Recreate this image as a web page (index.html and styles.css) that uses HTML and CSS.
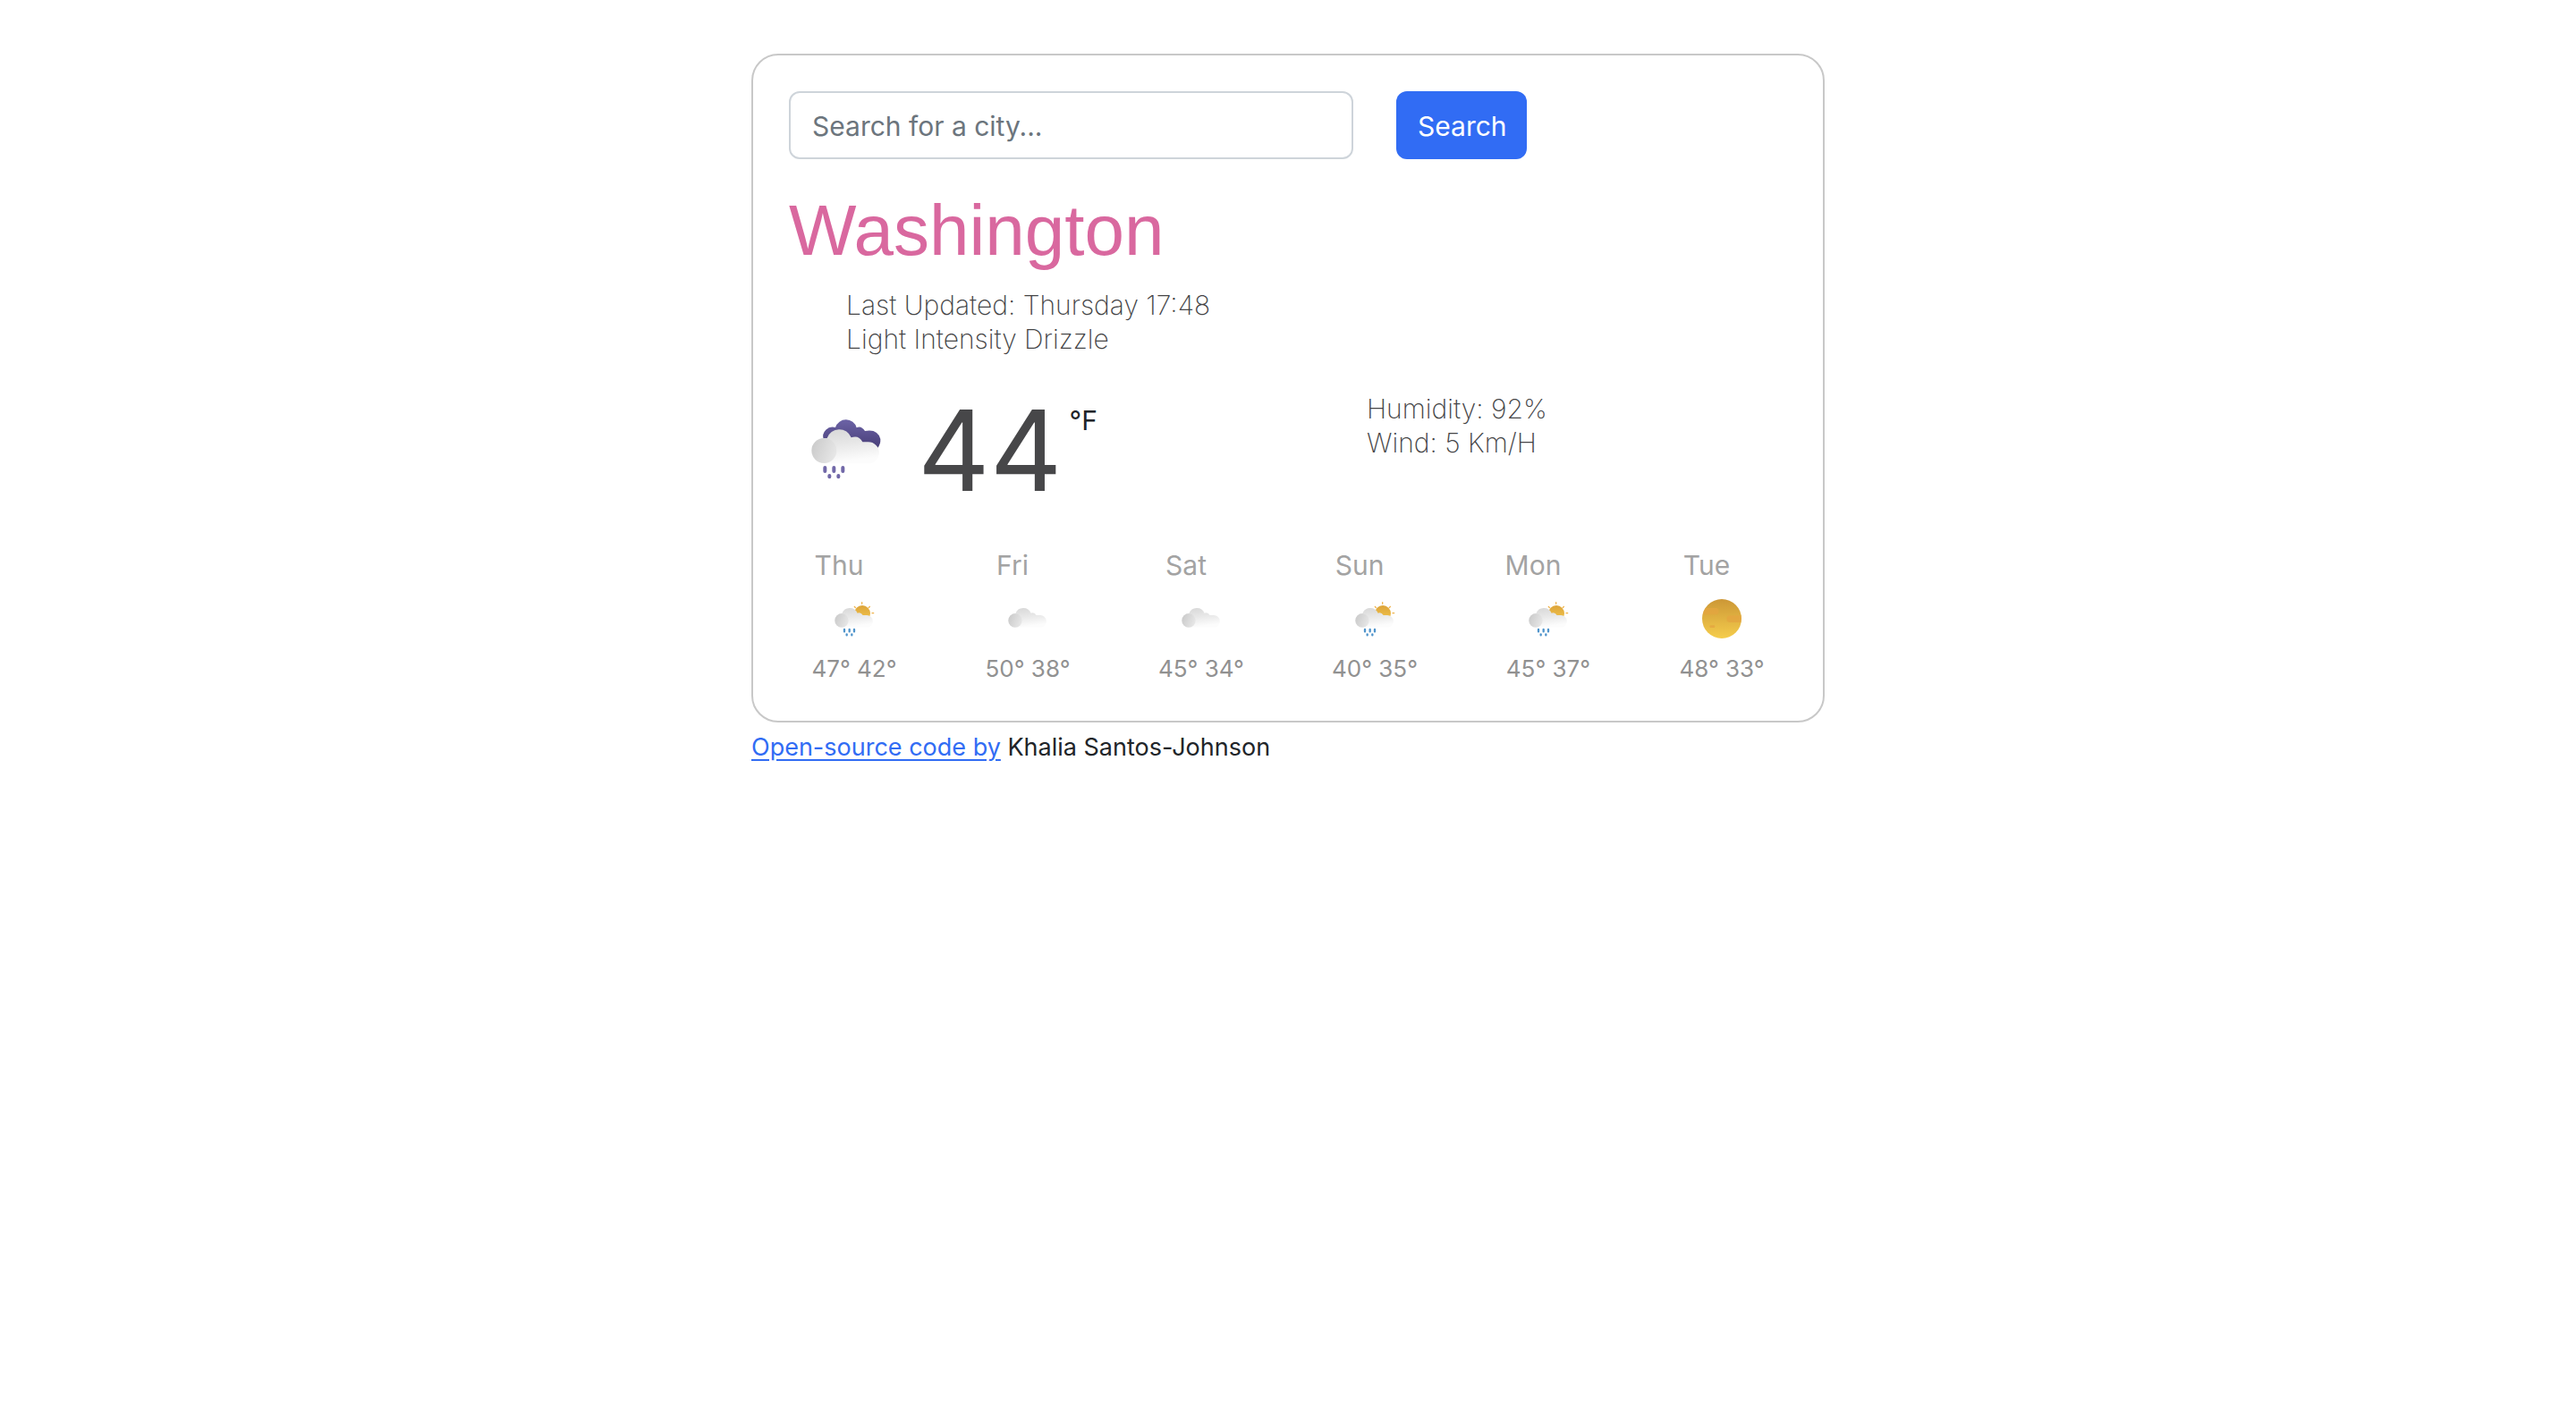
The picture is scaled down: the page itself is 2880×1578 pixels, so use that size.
FILE: index.html
```html
<!DOCTYPE html>
<html lang="en">
<head>
<meta charset="utf-8">
<meta name="viewport" content="width=device-width, initial-scale=1">
<title>Weather</title>
<link rel="stylesheet" href="styles.css">
</head>
<body>
<svg class="defs" aria-hidden="true">
  <defs>
    <linearGradient id="cloud" x1="0" y1="0" x2="0.25" y2="1"><stop offset="0" stop-color="#d6d6d6"/><stop offset="0.5" stop-color="#e7e7e7"/><stop offset="1" stop-color="#fcfcfc"/></linearGradient>
    <linearGradient id="puff" x1="0" y1="0.3" x2="1" y2="0.7"><stop offset="0" stop-color="#cbcbcb"/><stop offset="1" stop-color="#e8e8e8"/></linearGradient>
    <linearGradient id="storm" x1="0" y1="0" x2="0" y2="1"><stop offset="0" stop-color="#6c63a6"/><stop offset="1" stop-color="#453b74"/></linearGradient>
    <linearGradient id="sun" x1="0" y1="0" x2="0" y2="1"><stop offset="0" stop-color="#cc9736"/><stop offset="1" stop-color="#f5cd4c"/></linearGradient>
    <linearGradient id="smallsun" x1="0" y1="0" x2="0" y2="1"><stop offset="0" stop-color="#dda43a"/><stop offset="1" stop-color="#f3c84e"/></linearGradient>
    <symbol id="i-cloud" viewBox="0 0 144 144">
      <path fill="url(#cloud)" d="M30 101A23 23 0 0 1 31 54A28 28 0 0 1 83 53Q94 49 101 60H113A20 20 0 0 1 115 101Z"/>
      <circle cx="30" cy="78" r="23" fill="url(#puff)"/>
    </symbol>
    <symbol id="i-sunrain" viewBox="0 0 144 144">
      <g stroke="#efb34c" stroke-width="4" stroke-linecap="round"><path d="M98 17V22M73 31L76 35M124 31L121 35M132 53H137"/></g>
      <circle cx="99" cy="54" r="27" fill="url(#smallsun)"/>
      <use href="#i-cloud"/>
      <g stroke="#4f94cb" stroke-width="7" stroke-linecap="round"><path d="M39 108V115M56 108V115M72 108V115M47 124V127M64 124V127"/></g>
    </symbol>
    <symbol id="i-sun" viewBox="0 0 144 144">
      <circle cx="72" cy="72" r="66" fill="url(#sun)"/>
      <path fill="#e3a540" opacity=".8" d="M17 36H52Q62 37 62 47Q61 58 50 58H8Q10 46 17 36ZM98 61H137Q139 73 136 84H98Q88 82 88 72Q89 62 98 61ZM34 94H47Q52 98 47 102H34Q28 98 34 94Z"/>
    </symbol>
    <symbol id="i-storm" viewBox="0 0 288 288">
      <path fill="url(#storm)" d="M68 112A32 32 0 0 1 108 72A37 37 0 0 1 179 73Q194 64 207 84Q250 76 259 111Q260 128 250 140L160 150Z"/>
      <path fill="url(#cloud)" d="M70 193A42 42 0 0 1 80 108A43 43 0 0 1 161 106Q186 96 199 121H218A36 36 0 0 1 219 193Z"/>
      <circle cx="70" cy="150" r="42" fill="url(#puff)"/>
      <g stroke="#7168a8" stroke-width="12" stroke-linecap="round"><path d="M73 207V219M103 207V219M133 207V219M88 234V238M118 234V238"/></g>
    </symbol>
  </defs>
</svg>
<div class="container">
  <main class="card">
    <form class="search">
      <input class="search-input" type="search" placeholder="Search for a city..." aria-label="City">
      <button class="search-button" type="submit">Search</button>
    </form>
    <h1 class="city">Washington</h1>
    <ul class="details">
      <li>Last Updated: Thursday 17:48</li>
      <li>Light Intensity Drizzle</li>
    </ul>
    <div class="current">
      <div class="temperature">
        <svg class="icon-large" role="img" aria-label="Drizzle"><use href="#i-storm"/></svg>
        <strong class="degrees">44</strong>
        <span class="unit">°F</span>
      </div>
      <ul class="details">
        <li>Humidity: 92%</li>
        <li>Wind: 5 Km/H</li>
      </ul>
    </div>
    <div class="forecast">
      <div class="day"><div class="day-name">Thu</div><svg class="icon"><use href="#i-sunrain"/></svg><div class="range">47° 42°</div></div>
      <div class="day"><div class="day-name">Fri</div><svg class="icon"><use href="#i-cloud"/></svg><div class="range">50° 38°</div></div>
      <div class="day"><div class="day-name">Sat</div><svg class="icon"><use href="#i-cloud"/></svg><div class="range">45° 34°</div></div>
      <div class="day"><div class="day-name">Sun</div><svg class="icon"><use href="#i-sunrain"/></svg><div class="range">40° 35°</div></div>
      <div class="day"><div class="day-name">Mon</div><svg class="icon"><use href="#i-sunrain"/></svg><div class="range">45° 37°</div></div>
      <div class="day"><div class="day-name">Tue</div><svg class="icon"><use href="#i-sun"/></svg><div class="range">48° 33°</div></div>
    </div>
  </main>
  <footer class="credit"><a href="#">Open-source code by</a> Khalia Santos-Johnson</footer>
</div>
</body>
</html>
```
FILE: styles.css
```css
* { box-sizing: border-box; }
body {
  margin: 0;
  background: #fff;
  color: #212529;
  font-family: Inter, "Liberation Sans", sans-serif;
  font-size: 30px;
}
.defs { position: absolute; width: 0; height: 0; }
.container { max-width: 1200px; margin: 60px auto 0; }
.card {
  padding: 40px 40px 38px;
  border: 2px solid #c8c8c8;
  border-radius: 30px;
}
.search {
  display: grid;
  grid-template-columns: repeat(12, 1fr);
  gap: 48px;
}
.search-input, .search-button {
  min-width: 0;
  height: 76px;
  padding: 2px 24px 0;
  border-radius: 12px;
  font: inherit;
}
.search-input {
  grid-column: span 7;
  border: 2px solid #ced4da;
  background: #fff;
  color: #212529;
  appearance: none;
}
.search-input::placeholder { color: #6c757d; opacity: 1; }
.search-button {
  grid-column: span 2;
  border: 0;
  background: #316cf4;
  color: #fff;
  text-align: left;
}
.city {
  margin: 32px 0 16px;
  color: #d9689f;
  font: 400 80px/96px "Liberation Sans", Arial, sans-serif;
}
.details {
  margin: 0;
  padding-left: 64px;
  list-style: none;
  color: #444446;
  font-weight: 200;
  line-height: 38px;
}
.current {
  display: grid;
  grid-template-columns: 1fr 1fr;
  gap: 48px;
  margin: 40px 0 38px;
}
.temperature { display: flex; padding-left: 16px; }
.icon-large { width: 96px; height: 96px; margin: 16px 32px 0 0; }
.degrees {
  color: #474749;
  font-size: 125px;
  font-weight: 400;
  line-height: 132px;
}
.unit { margin-left: 8px; line-height: 64px; }
.forecast {
  display: grid;
  grid-template-columns: repeat(6, 1fr);
  gap: 48px;
}
.day { text-align: center; }
.day-name {
  padding-right: 34px;
  color: #a3a3a3;
  line-height: 48px;
}
.icon { display: block; width: 48px; height: 48px; margin: 12px auto; }
.range { color: #919191; font-size: 26px; line-height: 40px; }
.credit { padding-top: 8px; font-size: 27px; line-height: 40px; }
.credit a { color: #316cf4; text-underline-offset: 4px; }
```
